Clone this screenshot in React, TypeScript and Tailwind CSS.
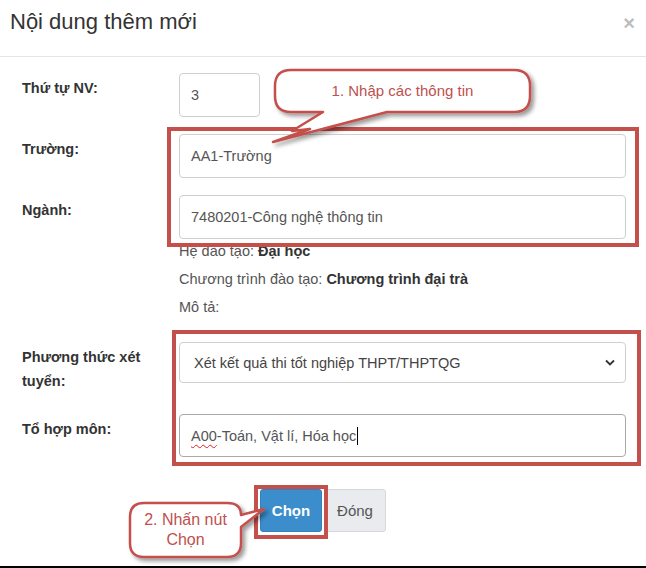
import { ReactNode } from "react";

const RED = "#c4504c";

const Label = ({ children, className = "" }: { children: ReactNode; className?: string }) => (
    <div className={`w-[135px] shrink-0 mr-[22px] font-bold text-[#333] ${className}`}>{children}</div>
);

const Field = ({ children, className = "" }: { children: ReactNode; className?: string }) => (
    <div
        className={`flex items-center rounded-[4px] border border-[#cfcfcf] bg-white px-[11px] text-[#555] ${className}`}
    >
        {children}
    </div>
);

const Callout1 = () => (
    <div className="absolute left-[260px] top-[60px] h-[95px] w-[290px]">
        <svg width="290" height="95" viewBox="260 60 290 95" className="absolute inset-0">
            <defs>
                <filter id="sh1" x="-10%" y="-10%" width="130%" height="140%">
                    <feDropShadow dx="3" dy="3" stdDeviation="2" floodColor="#000" floodOpacity="0.4" />
                </filter>
            </defs>
            <path
                d="M291 70 H514 Q530 70 530 86 V96 Q530 112 514 112 H387 L273 142 L310 129 L292 131 L323 112 H291 Q275 112 275 96 V86 Q275 70 291 70 Z"
                fill="#fff"
                stroke={RED}
                strokeWidth="2.5"
                strokeLinejoin="round"
                filter="url(#sh1)"
            />
        </svg>
        <div className="absolute left-[15px] top-[10px] flex h-[42px] w-[255px] items-center justify-center text-[15px] text-[#c0504d]">
            1. Nhập các thông tin
        </div>
    </div>
);

const Callout2 = () => (
    <div className="absolute left-[120px] top-[495px] h-[70px] w-[150px]">
        <svg width="150" height="70" viewBox="120 495 150 70" className="absolute inset-0">
            <defs>
                <filter id="sh2" x="-10%" y="-10%" width="130%" height="140%">
                    <feDropShadow dx="3" dy="3" stdDeviation="2" floodColor="#000" floodOpacity="0.4" />
                </filter>
            </defs>
            <path
                d="M144 503 H227 Q241 503 241 515 L264 509 L241 527 V543 Q241 557 227 557 H144 Q130 557 130 543 V517 Q130 503 144 503 Z"
                fill="#fff"
                stroke={RED}
                strokeWidth="2.5"
                strokeLinejoin="round"
                filter="url(#sh2)"
            />
        </svg>
        <div className="absolute left-[10px] top-[8px] flex h-[54px] w-[111px] flex-col items-center justify-center text-[16px] leading-[20px] text-[#c0504d]">
            <span>2. Nhấn nút</span>
            <span>Chọn</span>
        </div>
    </div>
);

export default function App() {
    return (
        <div className="relative flex h-[568px] w-[646px] flex-col overflow-hidden bg-white font-['Liberation_Sans',Arial,sans-serif] text-[14.5px] leading-[20px]">
            {/* Header */}
            <header className="flex h-[57px] shrink-0 items-start justify-between border-b border-[#e5e5e5] pl-[10px] pr-[11px] pt-[8px]">
                <h4 className="text-[22px] leading-[28px] text-[#333]">Nội dung thêm mới</h4>
                <span className="mt-[1px] text-[20px] font-bold leading-[28px] text-[#bdbdbd]">×</span>
            </header>

            {/* Body */}
            <div className="pl-[22px] pr-[20px] pt-[16px]">
                <div className="flex">
                    <Label className="mt-[5px]">Thứ tự NV:</Label>
                    <Field className="h-[44px] w-[81px]">3</Field>
                </div>

                <div className="mt-[17px] flex">
                    <Label className="mt-[5px]">Trường:</Label>
                    <Field className="h-[44px] flex-1">AA1-Trường</Field>
                </div>

                <div className="mt-[17px] flex">
                    <Label className="mt-[5px]">Ngành:</Label>
                    <div className="flex-1">
                        <Field className="h-[44px]">7480201-Công nghệ thông tin</Field>
                        <div className="mt-[2px] text-[#555]">
                            Hệ đào tạo: <b className="text-[#333]">Đại học</b>
                        </div>
                        <div className="mt-[8px] text-[#555]">
                            Chương trình đào tạo: <b className="text-[#333]">Chương trình đại trà</b>
                        </div>
                        <div className="mt-[8px] text-[#555]">Mô tả:</div>
                    </div>
                </div>

                <div className="mt-[25px] flex items-start">
                    <Label className="mt-[3px] -mb-[10px] leading-[24px]">Phương thức xét tuyển:</Label>
                    <Field className="h-[41px] flex-1 justify-between !px-[14px] !text-[#444]">
                        <span>Xét kết quả thi tốt nghiệp THPT/THPTQG</span>
                        <svg width="10" height="7" viewBox="0 0 10 7" className="mr-[-4px]">
                            <polyline points="1,1.5 5,5.5 9,1.5" fill="none" stroke="#333" strokeWidth="1.8" />
                        </svg>
                    </Field>
                </div>

                <div className="mt-[31px] flex">
                    <Label className="mt-[5px]">Tổ hợp môn:</Label>
                    <Field className="h-[43px] flex-1 !border-[#a9a9a9]">
                        <span className="underline decoration-[#e02020] decoration-wavy decoration-1 underline-offset-[3px]">
                            A00
                        </span>
                        <span>-Toán, Vật lí, Hóa học</span>
                        <span className="ml-px inline-block h-[18px] w-px bg-black" />
                    </Field>
                </div>
            </div>

            {/* Footer */}
            <div className="mt-[32px] flex justify-center gap-[2px]">
                <button className="h-[43px] w-[62px] rounded-[3px] border border-[#367fb8] bg-[#3c8dcc] text-[15px] font-bold text-white">
                    Chọn
                </button>
                <button className="h-[43px] w-[62px] rounded-[3px] border border-[#d6d8db] bg-[#e9ebee] text-[15px] text-[#555]">
                    Đóng
                </button>
            </div>

            <div className="mt-auto h-[2px] w-full shrink-0 bg-black" />

            {/* Annotations */}
            <div className="absolute left-[167px] top-[127px] h-[120px] w-[472px] border-[4px] border-[#c4504c]" />
            <div className="absolute left-[172px] top-[330px] h-[136px] w-[469px] border-[4px] border-[#c4504c]" />
            <div className="absolute left-[254px] top-[485px] h-[54px] w-[74px] border-[4px] border-[#c4504c]" />
            <Callout1 />
            <Callout2 />
        </div>
    );
}
